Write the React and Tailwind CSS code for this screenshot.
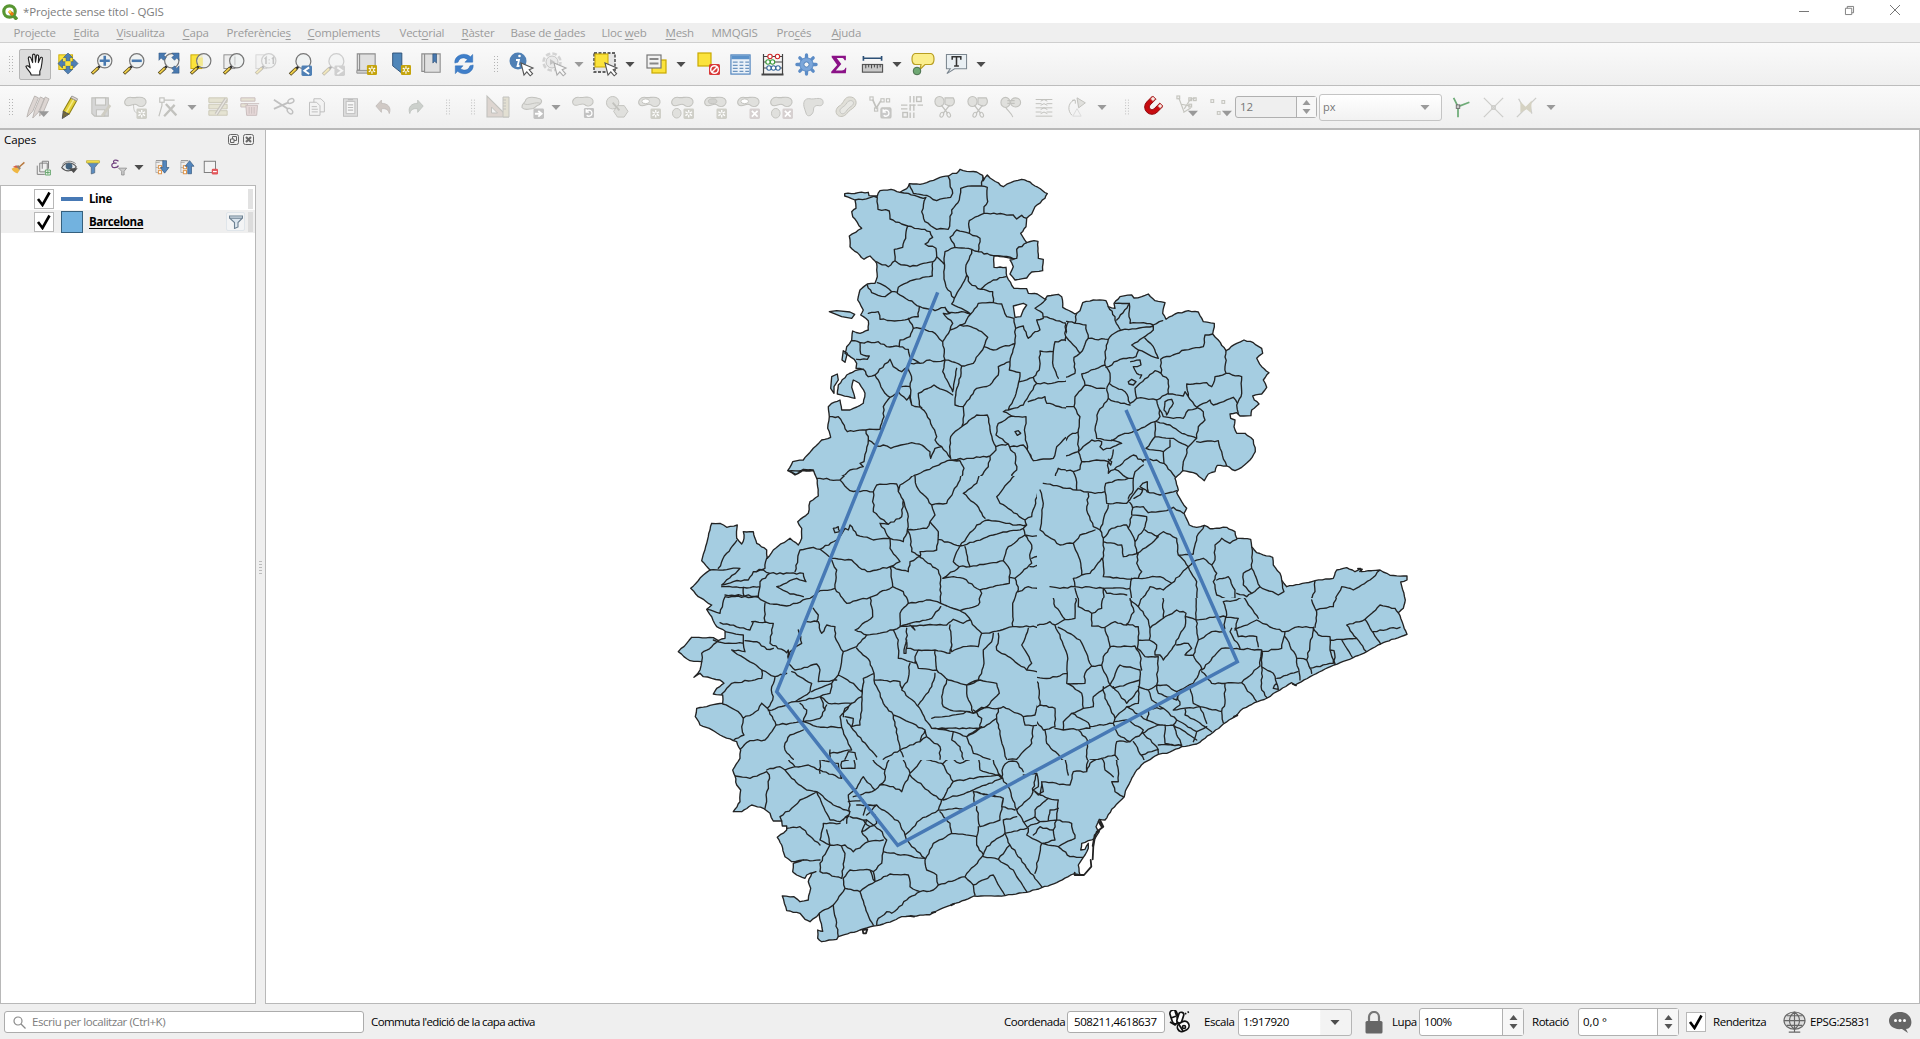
import React from "react";

/* ---------- map geometry: strings of x,y pairs, three units per pixel ---------- */
const SHEETS = {
  A: [760, 150],
  B: [1060, 270],
  C: [670, 470],
  D: [1030, 540],
  E: [720, 720],
};
const MAP_X = 266;
const MAP_Y = 130;

/* Area of the canvas that each sheet is responsible for. */
const SHEET_AREAS = {
  A: "M0 0H800V346H0z",
  B: "M800 0H1653V468H771V346H800z",
  C: "M0 346H771V630H0z",
  D: "M771 468H1653V630H771z",
  E: "M0 630H1653V873H0z",
};

const OUTLINE = [
  ["A", "254,131 325,127 327,137 352,138 360,122 393,118 420,127 440,116 448,101 480,103 500,98 540,82 566,78 578,70 590,70 600,58 620,64 650,66 668,76 670,92 682,75 690,84 730,110 752,98 785,88 810,96 825,108 848,122 862,131 855,145 825,170 815,192 800,205 798,230 782,250 800,278 822,272 834,274 835,325 850,328 848,362 815,366 800,384 765,390 750,372 760,350 750,330 765,326 720,320 702,318 702,352 738,352 740,378 762,415 800,416 805,430 832,432 855,448 862,438 895,433 905,440 908,472 945,492"],
  ["B", "60,122 68,98 100,90 138,92 145,110 165,115 162,100 180,80 215,75 222,84 245,80 265,72 285,92 315,98 308,130 318,148 345,132 385,122 415,126 430,155 463,160 458,192 475,210 498,242 530,220 552,210 580,218 605,235 608,250 590,265 605,290 627,308 610,330 620,352 605,372 578,378 583,390 597,402 575,420 573,437 540,438 530,428 510,432 512,445 525,450 522,470 530,490 555,490 580,510 586,545 570,570 545,592 525,602 500,588 472,586 465,605 445,612 433,632 410,612 368,602 345,625 355,660 350,668 365,695 380,715 372,730 388,765 410,772 433,766 450,776 500,772 525,785 530,805 572,808 575,830 590,848 638,862 640,885 660,910 665,930 680,950 765,932 820,925 830,900 860,893 885,905 900,895 905,905 935,902 960,900 990,916"],
  ["D", "1131,108 1131,120 1112,126 1126,180 1120,205 1105,218 1131,283 1085,298 1052,312 1010,335 968,354 912,375 850,405 795,435 785,428 740,455 712,474 683,485 640,505 615,530 580,552 550,577 500,612 455,620 410,640 385,643 342,668 320,690 302,722 290,745 283,770 245,808"],
  ["E", "1155,300 1138,298 1128,320 1138,335 1125,355 1105,362 1085,370 1082,390 1095,388 1105,370 1105,385 1090,412 1075,435 1080,465 1060,462 1010,488 965,503 920,517 855,527 762,528 735,540 690,556 640,578 630,584 570,588 545,590 520,602 480,615 460,618 420,630 355,650 350,658 305,665 293,655 293,630 308,634 300,600 298,580 290,590 270,605 255,598 240,580 200,572 187,528 222,530 240,545 265,540 272,505 265,485 275,460 288,455 260,465 255,475 230,465 218,455 220,430 250,420 215,425 195,410 185,375 172,352 200,330 200,318 187,318 185,303 160,303 150,280 130,265 95,255 65,275 40,275 60,245 62,210 50,195 45,168 38,150 60,115 62,90 50,65"],
  ["C", "190,812 150,795 118,775 90,765 76,740 80,715 110,710 140,702 158,700 158,675 130,672 140,655 162,640 150,630 125,625 100,620 90,610 72,622 90,600 95,575 60,572 25,545 50,520 65,502 130,503 145,512 165,505 165,483 140,470 125,440 110,418 125,405 85,380 62,355 100,315 120,300 95,272 110,220 120,180 125,160 150,160 170,172 202,165 200,205 215,222 222,205 220,185 250,185 260,220 290,240 292,265 310,240 325,228 350,212 360,205 385,225 395,205 395,175 383,155 415,130 420,95 445,78 442,30 430,0 400,0 375,15 355,3"],
  ["A", "160,962 130,958 108,973 83,962 98,935 130,930 160,895 185,870 212,862 203,835 208,800 205,770 215,760 240,750 245,780 270,780 310,760 315,730 298,700 280,690 275,712 285,745 265,740 232,732 235,705 260,675 285,662 310,658 288,655 290,640 283,628 255,610 260,590 275,570 278,543 300,550 325,540 325,512 302,495 310,480 293,450 300,420 322,402 345,400 352,380 350,340 330,318 312,328 270,290 268,258 305,235 278,200 275,185 288,175 285,150 254,138 254,131"],
];

const ISLANDS = [
  ["A", "208,485 230,482 270,486 284,493 275,505 245,500 208,485"],
  ["A", "215,680 232,672 235,690 222,710 222,730 212,715 215,680"],
  ["A", "250,602 262,610 255,637 246,630 250,602"],
];
const HOLE = ["A", "760,468 790,460 800,465 790,480 782,500 765,502 760,468"];
const HARBOUR = [
  ["E", "1140,300 1150,320 1130,335 1125,350 1120,380 1118,418"],
  ["E", "1136,305 1146,322 1124,345 1118,378"],
  ["E", "1112,420 1114,440 1092,465 1064,465 1064,458"],
  ["E", "428,630 442,628 438,640 430,640 428,630"],
  ["E", "572,588 582,590"], ["E", "636,578 646,576"], ["E", "694,556 702,552"],
  ["D", "788,432 798,436"], ["D", "612,530 622,526"], ["D", "984,86 996,88 990,94"],
];

const BORDERS = {
  A: `325,127 352,143 354,178 388,183 390,207 443,228 485,238 510,245|285,150 330,143 352,138|420,127 445,130 490,145 498,142 485,185 495,215 530,238 565,238 575,180 598,150 602,115 635,108 665,108 682,112 683,155 672,170 672,190 760,195 770,207 785,196 800,205|448,101 460,130 500,136 530,152 572,142 578,130 565,80|668,76 665,108|443,228 437,265 428,292 403,298 405,332 385,350 350,335|510,245 518,262 495,282 528,295 530,320 520,335 450,350 415,340 405,332|672,190 628,212 628,250 590,240 570,262 585,292 635,298 655,305 660,265 628,250|585,292 555,305 552,375 558,410 583,445 620,375 618,345 635,310 635,298|655,305 690,315 770,325 770,298 800,278|530,320 552,342|518,335 517,378 460,390 415,412 412,430 480,470 525,482 555,472 565,488 605,485 632,492 655,460 700,458 725,462|620,375 630,400 662,418 700,390 738,380|352,398 378,410 395,425 375,440 335,428 322,405|395,425 412,427|583,445 575,462 632,492|662,418 698,425 700,458|725,462 740,500 762,505 767,535|325,490 355,485 360,508 415,512 475,500 478,472|555,472 570,490 550,490 578,520 570,540 548,575|445,505 460,535 490,535 525,550 548,575 555,630 530,635 510,630 480,640 452,625 445,598 418,590 420,570 450,560 460,535|570,540 600,525 632,530 665,545 683,562 672,590 640,640 605,648 575,635 555,630|632,492 615,520 600,525|672,590 700,600 765,580 767,535 790,528 805,565 825,545 840,540 830,510 850,505 848,490 825,475 858,448|302,578 355,575 380,590 418,590|275,572 300,578 302,612 328,618 322,628 290,628|765,580 750,635 748,660 780,668 778,690 765,740 745,780|750,635 715,650 715,675 690,705 650,715 610,770 585,765 588,725 602,680 605,648|555,630 548,665 578,725 590,655|345,675 390,628 400,650 425,665 445,650 455,690 450,710 425,710|452,640 480,640|345,675 325,680 310,658|345,675 355,690 375,730 390,742 370,770 372,800 360,838 318,840 262,845 235,800 208,800|390,742 415,725 440,750 450,735 455,765 485,772|450,710 455,765|475,730 522,705 578,735|475,730 478,765 510,810 530,860 525,870 545,890 572,925|745,780 730,785 755,798 798,800 795,850 802,900 820,932 880,925 890,890 940,845 955,842|610,770 612,795 605,830 572,860 570,900 572,925|605,830 650,795 682,795 692,850 708,900|755,798 715,820 708,855 745,882 752,900 765,910 770,960 755,975 760,990|708,900 690,918 630,925 572,930 500,960 435,990|708,890 745,882|318,840 325,870 350,888 370,885 392,895 455,878 478,882 510,905 512,925 525,895 545,890|745,780 790,765 830,700 875,700 955,685|830,700 820,682 838,660 840,603 880,605 880,650 895,685|780,695 820,682|880,605 885,575 915,570 918,520 850,500|915,570 950,600 955,640 945,670 955,685|805,755 855,740 860,760 925,775 945,765 945,730 955,720|325,870 312,935 300,940 310,950 270,960 240,985 165,985 160,962|572,930 600,932 612,955 600,990|690,918 685,950 660,980 640,990|880,990 895,955 930,965 955,960|752,890 790,885 820,932|918,520 950,525 955,490 945,492|765,845 775,842 782,850 772,856 765,845|945,765 950,800 945,845`,
  B: `0,145 25,155 45,160 50,130|48,160 78,165 85,205 60,250 42,262 45,310 25,320 0,325|25,155 15,195 40,225 60,250|85,205 105,208 145,208 155,195 185,180 280,168|145,110 165,140 165,150 180,178|165,100 208,100 210,160 250,158 280,165 308,152|145,208 135,245 135,285 65,312 75,345 110,355 135,355|170,150 205,105|280,168 280,180 215,225 235,240 295,265 280,230 255,205|302,268 375,240 430,230 435,195 458,192|498,242 495,290 498,310 465,320 455,350 440,338 380,342 385,380 410,412 450,390 460,405 520,382 532,400|498,310 545,320 545,370 530,405 535,430|135,285 150,310 150,335 140,360 145,385 115,425 105,480 110,505 155,512 175,498 235,480 285,455 300,440 295,410 290,390 255,385 230,385 210,400 195,365 150,342|145,385 165,395 210,405|138,292 180,268 228,260 235,242|302,268 303,310 325,330 325,370 290,390|303,310 285,302 240,340 225,355 230,385|212,275 240,270 243,285 220,290 230,310 245,315 240,325|205,335 215,328 228,335 220,345 207,342 205,335|325,372 370,378 375,365 385,380|300,420 310,440 370,445 385,420 410,415|315,395 335,388 340,400 320,435 312,420 315,395|290,455 330,465 365,490 410,505 415,470 435,450 430,425 410,412|285,500 340,505 385,530 410,505|410,515 475,512 485,545 500,588|285,455 285,500 258,535 310,545 330,530 330,510|385,530 370,575 368,602|310,545 312,580 345,620|75,345 45,380 42,410 60,440 55,480 55,545 65,575 60,598 40,605|0,412 42,410|55,485 30,495 0,530|55,545 0,565|55,545 95,510 125,515 120,530 130,540 160,530 185,520 155,510|65,575 110,570 145,575 155,565 160,540|145,575 145,610 220,555 250,575|165,598 205,625 220,625 225,605 250,585|145,568 155,575 152,585 145,575|40,605 48,625 50,660 0,650|0,595 40,605|50,660 105,670 135,665 137,640 205,625|135,665 140,700 200,700 215,680 235,655 248,660 240,675 222,685|220,625 220,660 205,685|85,670 80,720 100,770 120,780 145,705|220,712 250,710 265,728 320,722 340,712 370,730|205,690 218,715 215,735 260,740 255,770 225,815 205,775 215,740|120,780 130,805 155,775 200,765 205,775|260,665 300,675 350,662|0,825 40,820 60,795 105,780|130,805 130,920 190,925 235,925 245,905 230,880 235,850 190,860 185,825 130,815|225,815 230,850 275,820 295,800 255,780|290,800 310,785 350,805 355,855 385,890 335,940 300,920 235,925|40,820 60,870 65,915 40,925 45,950 0,955 -30,950|65,915 90,910 125,865 130,880|355,855 400,852 410,800 433,766|385,890 400,875 430,865 455,885 465,870 465,825 485,805 510,820 530,808|455,885 470,910 460,935 470,975 495,985 525,985 525,960 505,920 470,930|575,830 575,895 550,910 550,945 575,970 600,950 575,895|600,950 655,975 672,965 665,930|530,970 560,980 575,970|765,932 765,965 750,990|825,990 845,950 880,960 930,930 960,900|45,950 130,955 210,955 215,925|130,955 140,970 200,975|210,955 215,990|245,990 270,950 310,960 335,940|385,890 410,935 412,990|45,955 55,990|130,955 130,990|250,570 290,570 310,580|248,640 262,635 265,665 240,650 248,640|-50,640 0,650|-60,660 -50,700 -60,780 0,825`,
  C: `440,25 510,30 540,62 610,65|510,30 540,0|610,65 620,45 680,42 685,65 700,90 695,140 655,163 610,125 610,65|685,65 690,45 735,15 790,0|735,15 740,50 785,105 830,100 870,30 880,0|785,105 795,135 780,155 770,175 712,180 715,140 700,90|655,163 630,160 660,205 700,215 712,180|390,240 430,232 450,238 500,210 525,175 535,180 540,165 560,195 610,210 660,205|490,175 505,170 510,185 495,188 490,175|450,238 485,265 545,270 575,298 600,305 660,290 690,275 660,235 660,205|660,290 668,350|660,290 715,305 720,275 750,258 725,245 720,195 712,180|780,155 805,185 800,240 750,245 750,262 805,300 812,330|805,208 870,228|870,228 850,275 868,290 818,325|870,228 920,165 955,150 1040,165 1070,165 1060,175 970,195 870,228|935,0 920,40 880,70 920,105 945,145|1030,0 1035,15 980,80 990,100 1065,150 1070,165|1120,30 1105,60 1085,140 1065,150|885,230 900,290 1000,272 1015,230 1065,195 1060,175|868,290 900,290|1000,272 1020,300 1018,340 930,360 880,325 850,320 820,325|812,330 812,400 870,422 925,405 935,370 930,360|1065,195 1085,225 1080,265 1085,280 1035,325 1020,322|1065,195 1120,200|1080,290 1140,285|1085,265 1130,250|1035,325 1045,360 1028,400 1028,470 1110,470|1045,365 1075,350 1130,358|485,270 500,300 495,355 530,400 600,382 668,350 700,365 715,400 780,390 812,400|495,355 450,362 420,385 350,408 290,398|600,382 608,440 555,480 590,495 670,480 690,470 690,430 715,400|690,470 740,455 785,445 812,410|690,470 770,465 830,465 850,448 880,460 900,450|870,422 885,430 915,470 935,490 970,485 1028,470|935,490 925,530 880,530 845,545 840,465|970,490 965,515 940,540 940,590 925,630 890,645|985,490 980,540 1030,570 1070,600 1110,605|1075,475 1055,525 1085,580 1070,600|710,475 708,550 702,550 710,510|720,465 735,480 725,470|670,480 685,510 685,565 720,575 740,580 735,560 745,540 710,535|745,540 795,540 840,550 845,530|795,540 800,600 745,595 735,575|800,600 835,630 890,645 890,670 910,730 840,720 820,710 815,680 830,630|795,610 785,650 745,705|890,645 930,630 980,640 988,670 950,710 910,730|910,720 935,745 930,775 785,775|785,745 900,725|720,580 712,635 695,660 740,705 785,775|590,495 560,530 520,545 510,600 505,615 550,640 575,665 580,640|560,535 600,575 612,610 580,625 575,700 570,765|520,545 495,500 495,470 470,465 455,490 445,455 410,455|612,630 690,635 695,655|612,610 612,630 640,700 670,735 690,840|670,735 765,780 750,815 690,840|430,415 445,435 440,455|385,480 395,520 360,545 355,580 375,600 440,582 450,600 445,635 500,630|365,605 425,640 420,665 375,695 295,722|425,665 485,640 505,615|375,695 450,680 475,700 545,700 575,680|450,680 465,720 450,745 400,755|390,700 410,720 400,755|485,640 480,670 450,680|470,705 465,720|400,755 440,770 515,772 510,740 545,700|275,600 315,620 350,610|315,620 305,650 308,690 292,715|155,672 185,640 275,625 275,600|292,715 318,765 400,755|275,700 265,720 220,745 215,770 222,795 190,812|158,702 205,725 220,745|275,700 292,715|318,765 285,810 240,812 210,838|145,512 125,530 95,550 95,575|130,510 165,520 220,520 220,495 165,485|185,540 250,580 275,600|185,540 225,545 220,520|225,512 260,515 290,538 310,535|300,520 350,548 355,540 355,580|245,455 310,460 300,520|150,458 180,465 240,480 250,455|285,400 285,455|110,418 150,430 165,380 265,382 290,398|165,375 265,378|120,300 210,295 155,345 190,335 235,330 250,305 280,300 300,310|155,350 220,352 270,350 265,382|220,352 222,378|270,350 270,335 300,310 400,310 408,335 380,325 320,350 360,372 400,380|375,305 390,240|145,295 170,250 200,212|285,295 290,265|250,305 285,295|400,780 360,795 345,820 345,840 370,868|515,772 545,840 480,850|480,840 480,868|530,750 550,780 620,860|525,740 550,745 545,770 570,765|520,740 525,715 545,700|525,868 535,845 555,848 560,868|785,775 850,785 890,800 935,770|765,780 770,800 810,830 810,868|850,785 845,810 870,830 880,868|890,800 960,760 980,745|980,745 1000,830 1010,868|910,730 935,712 985,715 980,745|985,715 1000,710 1060,740|1110,605 1108,690 1095,735 1060,740 1065,765 1110,765|890,800 910,850 960,868|1090,770 1085,820 1040,868 1015,868|690,840 700,860|750,815 770,800|640,868 690,840`,
  D: `65,155 75,200 105,238 135,235 140,150|0,265 60,245 75,255 105,238|75,255 100,315 112,345 112,400 110,430 165,430 165,400 185,378 215,375|85,262 150,300 185,378|145,140 145,200 185,220 215,205 220,140|185,220 185,258 225,262 240,320 315,318 330,345 335,390|225,262 255,245 290,255 312,215 300,175 305,115|300,180 325,200 355,240 360,265 358,300 325,300 325,260 290,252|325,200 345,150 400,150 400,235 360,265|400,235 440,210 468,220 465,260 430,320 400,360 390,345 375,345 380,315 358,300|325,300 322,325 345,350 385,350|385,350 380,435 355,450 325,440|495,120 498,230 505,300 490,345 515,385 490,430 440,455 410,435 380,435|468,230 498,240 580,228|505,300 545,275 580,275|440,315 475,310 485,325 465,345 490,345|515,390 575,325 620,325 695,330|515,395 545,430 635,428 690,378 695,330|215,375 220,350 242,320|215,375 240,435 270,375 330,390|240,435 250,445 330,420|330,390 325,450 290,490 250,440|0,410 60,415 110,400|110,430 155,460 160,505 190,500 190,470 240,435|220,440 225,475 255,535 290,500 325,490 325,450|10,510 30,495 75,505 75,560 40,570 20,545 0,580|30,495 25,430 0,410|75,565 100,570 100,545 125,520 160,505|125,520 175,548 180,565 100,570|180,560 250,550 255,535|45,570 50,610 90,650 120,690 170,690 172,600 145,570|250,550 265,585 300,605 335,580 340,570 290,540 255,545|335,580 385,555 430,555 440,540 400,505 365,480 355,450|380,435 385,460 440,480 450,460|360,505 350,540 390,555|360,505 400,505|290,500 350,540|430,510 460,505 510,500 575,515 580,548|480,445 490,490 510,500|585,430 585,490 575,515|440,460 450,495 430,510|465,505 465,525 525,560 545,575|510,500 530,550|440,540 500,575 530,560|500,575 490,605|430,555 500,600|405,555 405,610 455,618 430,555|340,580 380,620 385,640|310,605 342,660|335,645 385,628|385,615 455,615|300,605 260,605 255,645 215,655 265,720 268,665 255,645|172,690 180,660 215,655|180,600 172,615|635,428 680,485|695,330 695,380 695,450 712,474|695,380 730,400 740,430 730,445 745,448 740,430|740,415 803,395|695,335 755,325 765,275 730,265 680,240 615,270 625,235 580,228|580,185 590,225 580,275|580,185 620,180 640,170 685,235|605,265 600,275 630,325|615,265 625,290 680,290 685,320|765,275 795,262 850,262 848,280 830,360 800,355 765,290|800,355 810,420|830,360 845,400|840,385 910,370 900,330|850,262 865,285 900,290 900,330|900,300 980,295 950,255 1005,238 1052,312|935,300 968,354|900,330 912,332 915,372|980,295 1010,335|1005,238 1050,195 1095,205 1105,218|1030,275 1110,262|845,180 860,215 855,262|860,210 910,200 925,150`,
  E: `45,168 90,175 140,155 148,165 135,265|140,150 180,140 195,150 225,140 190,100 200,75|195,150 215,175 260,210 290,215 340,255 390,275|290,215 240,240 215,265 180,290 185,303|225,140 265,135 300,150 365,175 355,130 305,120 330,95|300,160 300,120|330,95 375,95 400,100 405,145 365,145 365,125 385,120|300,235 330,300 360,305 385,290 390,255 385,225 410,205 430,170 465,210 400,230|300,235 290,215|405,110 450,115 495,150 495,180 465,210|430,240 385,245|495,150 510,110 545,110 570,160 545,215 520,200 480,195|570,160 610,115 665,130 700,185 680,215 665,240 640,225 570,165|665,240 655,270 600,300 555,345 540,310 470,255 410,255|655,270 740,265 765,255 760,215 835,230|700,185 780,170 835,165 845,175 760,210 670,240|670,130 690,115 720,130 775,110 780,150 835,165|820,120 835,160 865,200|850,140 865,125 890,125 910,155|845,175 850,140|865,200 890,270 910,305 925,325|890,270 935,225 950,160|910,165 950,160 955,200 940,210 960,225 965,185 1050,195 1060,155 1100,155 1110,130|1035,115 1045,165|1105,90 1100,155|960,225 985,235|965,185 970,215 955,225 945,215|850,235 840,300 780,320 770,260|760,215 850,235 845,260 885,270|660,275 690,310 695,340 770,350 775,320|695,340 640,370 615,420 620,450 650,465 655,495|770,350 770,375 790,405 735,470 760,495 820,465 855,527|655,495 735,470|760,495 765,525|790,405 800,380 855,340 850,300 890,290|790,410 835,418 870,375 855,340|835,418 880,450 920,515|870,375 965,500|945,460 965,370 920,345 925,325|855,340 920,325|965,370 1015,380 1065,355 1055,310 1010,300 960,305 945,290 915,305|960,305 925,320|965,370 1005,360 1000,330 960,320 940,345|1010,300 1015,240 985,235 945,270 945,290|1000,330 1010,300|985,300 990,270 1015,265|1015,380 1050,410 1090,412|555,345 575,380 615,415 490,395 485,430 460,455|490,395 500,360 480,330|300,360 310,310 360,310|320,330 330,375 375,375 400,395 445,365 425,335 440,300 390,290|330,375 300,360|330,375 300,430 300,455 365,475 375,400 365,380|300,420 250,420|445,365 490,360|440,300 480,330|300,375 240,320 200,325|370,475 390,450 450,450 465,485 420,515 375,505 370,475|465,485 510,462 565,465 570,500 600,515 640,510 655,495|450,450 460,455 465,485|600,515 560,540 515,580 500,575 475,595 470,615|420,515 450,600 460,615|375,505 340,555 355,650|340,555 298,580|1110,130 1150,105 1185,105 1195,150 1195,185 1175,185 1185,215 1210,230|1150,110 1155,150 1180,170|370,300 385,285 380,310|430,285 440,255 470,255 440,285|430,300 450,320 425,335|450,320 470,310 465,285`,
};

const toPoints = ([sheet, text]) => {
  const [ox, oy] = SHEETS[sheet];
  return text.trim().split(/\s+/).map((p) => {
    const [x, y] = p.split(",").map(Number);
    return [ox + x / 3 - MAP_X, oy + y / 3 - MAP_Y];
  });
};

const noise = (x, y, k) => {
  const s = Math.sin(x * 12.9898 + y * 78.233 + k * 37.719) * 43758.5453;
  return (s - Math.floor(s)) * 2 - 1;
};

/* Adds the small irregularities of a surveyed border between two vertices. */
const roughen = (pts, amount) => {
  const out = [pts[0]];
  for (let i = 1; i < pts.length; i++) {
    const [x0, y0] = pts[i - 1];
    const [x1, y1] = pts[i];
    const len = Math.hypot(x1 - x0, y1 - y0);
    const n = Math.max(1, Math.round(len / 3.4));
    for (let j = 1; j < n; j++) {
      const t = j / n;
      const off = noise(x0 + j, y1 - j, i) * amount;
      out.push([x0 + (x1 - x0) * t - ((y1 - y0) / len) * off, y0 + (y1 - y0) * t + ((x1 - x0) / len) * off]);
    }
    out.push([x1, y1]);
  }
  return out;
};
const toPath = (pts) => "M" + pts.map((p) => p[0].toFixed(1) + " " + p[1].toFixed(1)).join("L");

const outlinePath = toPath(roughen(OUTLINE.flatMap(toPoints), 0.5)) + "Z";
const borderPaths = Object.entries(BORDERS).map(([k, v]) => [
  k,
  v.split("|").map((line) => toPath(roughen(toPoints([k, line]), 0.8))).join(""),
]);
const islandPath = ISLANDS.map((l) => toPath(toPoints(l)) + "Z").join("");
const holePath = toPath(toPoints(HOLE)) + "Z";
const harbourPath = HARBOUR.map((l) => toPath(toPoints(l))).join("");

function MapCanvas() {
  return (
    <svg className="block h-[873px] w-[1653px]" viewBox="0 0 1653 873" fill="none">
      <defs>
        <clipPath id="province"><path d={outlinePath} /></clipPath>
        {borderPaths.map(([k]) => (
          <clipPath key={k} id={"sheet" + k}><path d={SHEET_AREAS[k]} /></clipPath>
        ))}
      </defs>
      <path d={outlinePath} fill="#a5cde1" />
      <g stroke="#232323" strokeWidth="1.35" strokeLinejoin="round" strokeLinecap="round">
        <g clipPath="url(#province)">
          {borderPaths.map(([k, d]) => <path key={k} d={d} clipPath={"url(#sheet" + k + ")"} />)}
        </g>
        <path d={holePath} fill="#fff" />
        <path d={islandPath} fill="#a5cde1" />
        <path d={outlinePath} />
        <path d={harbourPath} strokeWidth="1.8" />
      </g>
      <path d="M671.7 162.3L510.7 561.7L631.7 715.3L971.3 531.7L860 280" stroke="#4779b5" strokeWidth="3.5" />
    </svg>
  );
}

/* ---------- icons, drawn on a 24 x 24 grid ---------- */
const Svg = ({ children, className = "h-6 w-6" }) => (
  <svg viewBox="0 0 24 24" fill="none" className={"block shrink-0 overflow-visible " + className}>{children}</svg>
);
const Handle = () => (
  <g fill="#b4b4b4">
    {[0, 1, 2, 3, 4, 5].map((i) => (
      <g key={i}><rect x="10" y={4 + i * 3} width="1" height="1" /><rect x="13" y={4 + i * 3} width="1" height="1" /></g>
    ))}
  </g>
);
const Tri = ({ c = "#4c4c4c" }) => <path d="M6.5 9.5h11L12 15.5z" fill={c} />;
const Lens = ({ children, back, x = 0 }) => (
  <g>
    {back}
    <path d={`M${8 + x} 16L${1 + x} 22.5`} stroke="#51451b" strokeWidth="3.6" />
    <path d={`M${7.3 + x} 16.5L${1.6 + x} 22`} stroke="#f0cf4a" strokeWidth="2" />
    <path d={`M${10 + x} 14L${8 + x} 16`} stroke="#222" strokeWidth="2.6" />
    <circle cx={15 + x} cy="8.5" r="7.8" fill="#eef1f2" fillOpacity=".82" stroke="#777" strokeWidth="1.3" />
    {children}
  </g>
);
const Badge = ({ c = "#c5a40c", t = "star" }) => (
  <g>
    <rect x="13" y="13" width="11" height="11" rx="1.5" fill={c} />
    {t === "star" && <g><path d="M18.500 14.500v8M15 16.500l7 4M22 16.500l-7 4" stroke="#fff" strokeWidth="1.300" /><circle cx="18.500" cy="18.500" r="1.300" fill={c} /></g>}
    {t === "lt" && <path d="M21 15l-5 3.5 5 3.5" stroke="#fff" strokeWidth="2" />}
    {t === "gt" && <path d="M16 15l5 3.5-5 3.5" stroke="#fff" strokeWidth="2" />}
    {t === "x" && <path d="M15.5 15.5l6 6M21.5 15.5l-6 6" stroke="#fff" strokeWidth="1.8" />}
    {t === "arrow" && <path d="M14.5 18.5h6M18 15.5l3.500 3-3.500 3" stroke="#fff" strokeWidth="2" />}
    {t === "rot" && <path d="M16 21a3.300 3.300 0 1 0-.3-4M15.500 14.500v3h3" stroke="#fff" strokeWidth="1.400" />}
  </g>
);
const Cursor = ({ s = "#555", f = "#fff" }) => (
  <path d="M12 11l3 12 2.8-3.2 3.4 4 2.4-2-3.4-4 3.8-1.8z" fill={f} stroke={s} strokeWidth="1.1" />
);
const G = "#c2c2be";
const GF = "#e0e0dd";
const Blob = ({ d = "M1.500 9C-1 5 3 .5 8 1.500c4 .8 7-1 11 0 4 1 5.500 5 2.500 8-2.500 2.300-6 1.500-8-.3C10 6.500 5 13 1.500 9z" }) => <path d={d} fill={GF} stroke={G} strokeWidth="1.100" />;

const ICONS = {
  handle: <Handle />,
  tri: <Tri />,
  triGrey: <Tri c="#9a9a9a" />,
  hand: <path d="M7.5 23c0-3-4.500-5.500-5.500-9 1-1.500 3-.5 4.500 1.500L4.500 5.500c0-2 2-2 2.700-.2L9 10V2.500C9 .8 11.300.8 11.500 2.500L12 9.500l1-6.500c.4-1.500 2.300-1.200 2.300.5l-.3 6.500 2-4.800c.7-1.400 2.500-.8 2.200.8-.8 5.500-.4 9-2.700 13V23z" fill="#fff" stroke="#222" strokeWidth="1.2" strokeLinejoin="round" />,
  pan: <g><rect x="2" y="2" width="15" height="16" fill="#fbe33c" stroke="#c9a800" /><g fill="#4f80b5" stroke="#2d5076" strokeWidth=".6"><path d="M12 0l5 5h-3v4h-4V5H7zM12 23l5-5h-3v-4h-4v4H7zM1 11.500l5-5v3h4v4H6v3zM23 11.500l-5-5v3h-4v4h4v3z" /></g><rect x="9" y="9" width="6" height="5" fill="#fbe33c" /></g>,
  zoomIn: <Lens><path d="M15 3v11M9.500 8.500h11" stroke="#4879b0" strokeWidth="2.800" /></Lens>,
  zoomOut: <Lens><path d="M9.500 8.500h11" stroke="#4879b0" strokeWidth="2.800" /></Lens>,
  zoomFull: <g><Lens /><g fill="#4879b0" stroke="#2d5076" strokeWidth=".5"><path d="M1 0h8L6.500 2.500 9 5 6 8 3.500 5.500 1 8zM23 0v8l-2.500-2.500L18 8l-3-3 2.500-2.500L15 0zM23 22v-8l-2.500 2.500L18 14l-3 3 2.500 2.500L15 22z" /></g></g>,
  zoomSel: <Lens back={<rect x="1" y="2" width="12" height="15" fill="#fbe33c" stroke="#c9a800" />}><path d="M9 5h5v9H9z" fill="#f3e98f" /></Lens>,
  zoomLayer: <Lens back={<rect x="1" y="2" width="12" height="15" fill="#eee" stroke="#8b8b8b" />}><path d="M13 4v9" stroke="#c4c4c4" /></Lens>,
  zoomOne: <g opacity=".3"><Lens back={<rect x="1" y="2" width="12" height="15" fill="#eee" stroke="#8b8b8b" />}><path d="M10.500 6.500l1.500-1.500v7M18.500 6.500l1.500-1.500v7M15.500 7v1M15.500 10.500v1" stroke="#555" strokeWidth="1.700" /></Lens></g>,
  zoomLast: <g><Lens /><Badge c="#4f80b5" t="lt" /></g>,
  zoomNext: <g opacity=".32"><Lens /><Badge c="#888" t="gt" /></g>,
  mapNew: <g><path d="M5 1h17v20H5zM5 1H2.500v17.500h2" fill="#e0e0e0" stroke="#8d8d8d" strokeWidth="1.200" /><path d="M2 19h14v3H2z" fill="#cfcfcf" stroke="#8d8d8d" /><Badge /></g>,
  markNew: <g><path d="M4 0h10v22l-5-4-5-4z" fill="#4f86b9" stroke="#2d5076" /><Badge /></g>,
  marks: <g><path d="M5 1h17v20H5zM5 1H2v19h3" fill="#e0e0e0" stroke="#8d8d8d" strokeWidth="1.200" /><path d="M14 1h4v10l-2-2-2 2z" fill="#4879b0" stroke="#2d5076" strokeWidth=".7" /></g>,
  refresh: <g fill="#3f7fca" stroke="#2765ae" strokeWidth=".5"><path d="M2 11C1 3 12-2 19 4l2.500-2.500V10H13l2.800-2.800C12 4 7 5 5.500 10z" /><path d="M22 13c1 8-10 13-17 7l-2.500 2.500V14H11l-2.800 2.800C12 20 17 19 18.500 14z" /></g>,
  info: <g><circle cx="9" cy="9" r="8.500" fill="#4f80b5" /><circle cx="10.500" cy="4" r="1.300" fill="#fff" /><path d="M7 8h3l-1.500 6h2" stroke="#fff" strokeWidth="1.800" /><Cursor /></g>,
  gearRun: <g opacity=".45"><circle cx="10" cy="10" r="8.500" stroke="#aaa" strokeWidth="2.500" strokeDasharray="4.500 2.200" /><circle cx="10" cy="10" r="6" fill="#ddd" stroke="#888" /><path d="M8 7l5 3-5 3z" fill="#888" /><Cursor /></g>,
  select: <g><rect x="1" y="1" width="21" height="19" fill="#e6e6e6" stroke="#333" strokeWidth="1.300" strokeDasharray="3 1.500" /><rect x="2" y="2" width="13" height="13" fill="#fbe33c" stroke="#c9a800" /><Cursor /></g>,
  form: <g><rect x="8" y="8" width="14" height="13" fill="#fbe33c" stroke="#c9a800" strokeWidth="1.200" /><rect x="3" y="3" width="14" height="13" fill="#f2f2f2" stroke="#777" strokeWidth="1.200" /><path d="M5.500 7h9M5.500 11.500h9" stroke="#888" strokeWidth="2" /></g>,
  deselect: <g><rect x="2" y="1" width="13" height="13" fill="#fbe33c" stroke="#c9a800" strokeWidth="1.200" /><rect x="13" y="12" width="11" height="11" rx="1.500" fill="#d93a3a" /><circle cx="18.500" cy="17.500" r="3.800" stroke="#fff" strokeWidth="1.500" /><path d="M16 20l5-5" stroke="#fff" strokeWidth="1.500" /></g>,
  table: <g><rect x="2" y="2" width="20" height="20" fill="#eaf1f8" stroke="#4d82bd" strokeWidth="1.200" /><rect x="2.500" y="2.500" width="19" height="4" fill="#5b91c9" /><path d="M4 9.500h5M11 9.500h4M17 9.500h4M4 12.800h5M11 12.800h4M17 12.800h4M4 16h5M11 16h4M17 16h4M4 19.300h5M11 19.300h4M17 19.300h4" stroke="#6b94bf" strokeWidth="1.300" /></g>,
  abacus: <g><path d="M2.500 2v20M21.500 2v20M2 4.500h20M2 10h20M2 16h20" stroke="#444" strokeWidth="1.200" /><path d="M0.500 22.500h22" stroke="#444" strokeWidth="2" /><g strokeWidth="1.100"><g fill="#fff" stroke="#cf2626"><circle cx="9" cy="4.500" r="2.200" /><circle cx="16.500" cy="4.500" r="2.200" /></g><g fill="#fff" stroke="#3b9a3b"><circle cx="7" cy="10" r="2.200" /><circle cx="11.500" cy="10" r="2.200" /></g><g fill="#fff" stroke="#38699d"><circle cx="8" cy="16" r="2.200" /><circle cx="12.500" cy="16" r="2.200" /><circle cx="17" cy="16" r="2.200" /></g></g></g>,
  gear: <g><g stroke="#5c8cc6" strokeWidth="3.400" strokeLinecap="round"><path d="M12 2v20M2 12h20M5 5l14 14M19 5L5 19" /></g><circle cx="12" cy="12" r="7" fill="#7ba6da" stroke="#5c8cc6" /><circle cx="12" cy="12" r="2.700" fill="#f5f5f5" stroke="#4e7fb9" /></g>,
  sigma: <path d="M4 3h15.500v5H18c-.5-2-1.500-2.500-3.500-2.500H9.500l5 6.500-6 7h6.500c2 0 3.500-1 4-3H20L19.500 22H3.500v-1.500L10 13 4 4.500z" fill="#8b1287" />,
  measure: <g><path d="M2.500 5.500h19M2.500 3v5M21.500 3v5" stroke="#2d5076" strokeWidth="1.700" /><rect x="1.500" y="12" width="21" height="8" fill="#c9c9c9" stroke="#555" strokeWidth="1.200" /><path d="M5 12v4M8 12v3M11 12v4M14 12v3M17 12v4M20 12v3" stroke="#444" /></g>,
  tip: <g><path d="M4 1.500h16c4 1 4 10 0 11h-6l-5 5 1-5H4c-4-1-4-10 0-11z" fill="#fbee8c" stroke="#b89e22" strokeWidth="1.200" /><circle cx="6" cy="19" r="3.800" fill="#6fa873" stroke="#4a6e4d" /></g>,
  text: <g><path d="M1.500 1.500h21v15H10L2 21.500l3.500-5h-4z" fill="#e9eff3" stroke="#7c8790" strokeWidth="1.100" /><path d="M7.500 7V4h9v3M12 4v9.500M9.500 13.500h5" stroke="#333" strokeWidth="1.600" /></g>,
  pencils: <g fill="#dcd5d2" stroke="#bab5b2"><path d="M9 0l4 2-6 14-6 6 2-8zM15 1l4 2-6 14-6 6 2-8zM20 1l4 2-6 14-4 4 1-7z" /><path d="M13 16h11l-5.500 6z" fill="#999" stroke="none" /></g>,
  pencil: <g><path d="M14.500 2l6 3-8 14-6-3z" fill="#e2cf37" stroke="#8f8116" strokeWidth="1.100" /><path d="M17.500 3.500l-8 14" stroke="#f5ec88" strokeWidth="1.500" /><path d="M14.500 2l1-2 6 3-1 2z" fill="#e7d9d2" stroke="#999" /><path d="M6.500 16l6 3-7 4.500z" fill="#756a3a" stroke="#555" /></g>,
  save: <g stroke={G} strokeWidth="1.200"><path d="M2 2h18v20H5l-3-3z" fill="#d6d6d6" /><path d="M6 2h11v8H6zM7 15h9v7H7z" fill="#efefef" /><path d="M22 10l-9 12" stroke="#cfcdc3" strokeWidth="3" /></g>,
  blobNew: <g><Blob /><path d="M10 9c0 6 1 8 4 9" stroke={G} /><Badge c="#cfcfc8" /></g>,
  vertex: <g stroke={G} strokeWidth="1.300"><rect x="2" y="1" width="5" height="5" /><path d="M4.500 6v4L1 22M7 3.500h12" /><path d="M9 8l12 13M19 9l-12 13" strokeWidth="2.600" /></g>,
  tableEdit: <g><path d="M2 2h20v5H2zM2 9h20v5H2zM2 16h20v5H2z" fill="#e5e3d2" stroke="#cbc8b6" /><path d="M21 3L10 20" stroke="#c7c4be" strokeWidth="4" /><path d="M21 3L10 20" stroke="#e9e7e2" strokeWidth="1.500" /></g>,
  trash: <g stroke="#cbbfbf" strokeWidth="1.200"><path d="M1 1h17v4H1zM1 8h8v4H1z" fill="#e7e3d4" /><path d="M5 8h18M7 10h14l-1 12H8z" fill="#e6d8d8" /><path d="M11 12v8M14 12v8M17 12v8" /></g>,
  cut: <g stroke="#c0c0c0" strokeWidth="1.500"><path d="M1 4l15 10M1 14l16-7" strokeWidth="2" /><ellipse cx="19.500" cy="5.500" rx="3.500" ry="2.300" transform="rotate(-25 19.500 5.500)" /><ellipse cx="18.500" cy="16.500" rx="3.500" ry="2.300" transform="rotate(45 18.500 16.500)" /></g>,
  copy: <g stroke="#bdbdbd" strokeWidth="1.100" fill="#f3f3f3"><path d="M9 2h8l4 4v11H9z" /><path d="M4 6h8l4 4v11H4zM6.500 11h6M6.500 14h7M6.500 17h7" /></g>,
  paste: <g stroke="#bdbdbd" strokeWidth="1.100"><rect x="4" y="2" width="16" height="20" fill="#ddd" /><path d="M7 5h10v14H7z" fill="#f6f6f6" /><path d="M9 9h6M9 12h6M9 15h6M9 3h6" strokeWidth="1.400" /></g>,
  undo: <path d="M9 4v4c8 0 13 5 10 13-1-4-3-7-10-6v4.500L2 11.500z" fill="#d0c9c5" stroke="#beb9b6" strokeLinejoin="round" transform="translate(1.500 0) scale(.9)" />,
  redo: <path d="M15 4v4C7 8 2 13 5 21c1-4 3-7 10-6v4.500l7-8z" fill="#ccd0cc" stroke="#babeba" strokeLinejoin="round" transform="translate(1 0) scale(.9)" />,
  square: <g><path d="M1 1v21h21z" fill="#ddd5d0" stroke={G} strokeWidth="1.100" /><path d="M5.500 12v6h6z" fill="#f4f4f4" stroke={G} /><path d="M17 2h6v20h-6z" fill="#e2dfd2" stroke={G} /><path d="M17 5h3M17 8h3M17 11h3M17 14h3" stroke={G} /></g>,
  move: <g><Blob d="M1 12c-1-4 4-5 4-8 2-4 10-3 15-1 3 2 1 6-3 7l-4 3c-4 0-9 3-12-1z" /><path d="M3 8c5 3 12-3 18 0" stroke={G} /><Badge c="#c2c2c2" t="arrow" /></g>,
  rotate: <g><Blob /><Badge c="#c2c2c2" t="rot" /></g>,
  simplify: <g><circle cx="8" cy="7" r="6.500" fill={GF} stroke={G} /><path d="M9 16l4-6h7l4 6-4 6h-7z" fill={GF} stroke={G} /><path d="M8 7l7 8" stroke={G} strokeWidth="2" /></g>,
  ring: <g><Blob /><ellipse cx="8" cy="5.500" rx="4" ry="2.500" fill="#fff" stroke={G} /><Badge c="#cfcfc8" /></g>,
  part: <g><Blob /><ellipse cx="6" cy="18" rx="4.500" ry="5" fill={GF} stroke={G} /><Badge c="#cfcfc8" /></g>,
  fill: <g><Blob /><ellipse cx="9" cy="5.500" rx="4.500" ry="2.500" fill="#d2d2cf" stroke={G} /><Badge c="#cfcfc8" /></g>,
  delRing: <g><Blob /><ellipse cx="8" cy="5.500" rx="4" ry="2.500" fill="#fff" stroke={G} /><Badge c="#d6d0d0" t="x" /></g>,
  delPart: <g><Blob /><ellipse cx="6" cy="18" rx="4.500" ry="5" fill={GF} stroke={G} /><Badge c="#d6d0d0" t="x" /></g>,
  reshape: <Blob d="M2 14c-3-8 0-13 6-12 5 1 10-2 14 1 2 3 1 7-3 7-5-1-7 1-7 5 0 4-5 9-8 5z" />,
  offset: <g><path d="M3 21c-4-4-1-9 3-11 4-3 4-9 10-9 7 0 9 7 5 11-3 3-5 3-8 7-3 4-8 4-10 2z" fill="#e0dfd8" stroke="#bfbeb6" /><path d="M6 18c-2-3 1-5 4-7s3-6 7-6 4 4 1 6-4 3-6 6-5 3-6 1z" fill="#e8e8e4" stroke={G} /></g>,
  splitVertex: <g stroke={G} strokeWidth="1.200"><rect x="1" y="1" width="3.500" height="3.500" /><rect x="13" y="3" width="3.500" height="3.500" /><rect x="19" y="3" width="3.500" height="3.500" /><path d="M4 4l4 9 5-8" strokeWidth="1.800" /><rect x="6" y="13" width="3.500" height="3.500" /><Badge c="#cacaca" t="rot" /></g>,
  merge: <g stroke={G} strokeWidth="1.500"><path d="M10 0v24M14 0v24M0 10h24M0 14h10" strokeDasharray="7 2" /><rect x="17" y="1" width="5" height="5" /><rect x="2" y="18" width="5" height="5" /></g>,
  scissorBlob: <g stroke={G} strokeWidth="1.200"><ellipse cx="6" cy="6" rx="5" ry="5.500" fill={GF} /><path d="M12 2h9c3 5 0 9-4 9l-5-2z" fill={GF} /><path d="M8 10l7 9M17 10l-7 9" strokeWidth="1.500" /><ellipse cx="8.500" cy="20.500" rx="1.800" ry="2.800" transform="rotate(25 8.500 20.500)" /><ellipse cx="16" cy="20.500" rx="1.800" ry="2.800" transform="rotate(-25 16 20.500)" /></g>,
  mergeBlob: <g stroke={G} strokeWidth="1.200"><ellipse cx="6" cy="7" rx="5" ry="5.500" fill={GF} /><ellipse cx="17" cy="7" rx="5.500" ry="5" fill={GF} /><path d="M8 5h8M8 8h8M6 12c2 4 6 6 8 11" /></g>,
  mergeAttr: <g stroke={G} strokeWidth="1.200"><path d="M2 3h20M2 8h7M15 8h7M2 13h20M2 18h7M15 18h7M2 23h20M8 5l4-2 4 2M8 10l4-2 4 2M8 15l4-2 4 2M8 20l4-2 4 2" /></g>,
  rotSym: <g stroke={G} strokeWidth="1.200"><path d="M12 1l10 6-8 6z" fill={GF} /><path d="M9 3C0 8 1 17 6 22M6 4h4v4" /><path d="M12 14l5 9H7z" stroke="#dcdcdc" /></g>,
  magnet: <g transform="rotate(45 12 12)"><path d="M4 3h5v9a3 3 0 0 0 6 0V3h5v9a8 8 0 0 1-16 0z" fill="#c80b10" stroke="#8e0508" /><path d="M4.500 3h4v4h-4zM15.500 3h4v4h-4z" fill="#f7e9e2" stroke="#b33" strokeWidth=".8" /></g>,
  snapV: <g stroke="#c6c6c0" strokeWidth="1.300"><path d="M3 2l6 16M9 14l7-11M6 9l10 2M16 3h5M8 18l8-5" /><rect x="1" y="0" width="3" height="3" /><rect x="14" y="2" width="3" height="3" /><rect x="19" y="2" width="3" height="3" /><rect x="14" y="9" width="3" height="3" /><path d="M13 16h11l-5.500 6z" fill="#999" stroke="none" /></g>,
  snapP: <g stroke="#c6c6c0" strokeWidth="1.200"><rect x="1" y="4" width="3" height="3" /><rect x="13" y="5" width="3" height="3" /><rect x="8" y="17" width="3" height="3" /><path d="M13 16h11l-5.500 6z" fill="#999" stroke="none" /></g>,
  topo: <g><path d="M3 1l5 10v12M8 11l13-5" stroke="#6fac78" strokeWidth="2" /><rect x="6" y="9" width="4" height="4" fill="#ccc" stroke="#666" /></g>,
  cross: <g stroke="#cdcdca" strokeWidth="1.500"><path d="M1 1l22 22M23 1L1 23" /><rect x="10" y="10" width="4" height="4" /></g>,
  trace: <g><path d="M23 1L1 23M3 2l6 11M16 8l2 11" stroke="#cdcdca" strokeWidth="1.500" /><path d="M5 5l6 6 7-7-1 14-5-4-7 4z" fill="#d5d2c2" /></g>,
  brush: <g><path d="M1 15l8-4 6 6-4 6c-4-1-8-4-10-8z" fill="#efb743" /><path d="M3 12l6-3 4 5z" fill="#d65a49" /><path d="M9 10l4-1 4 5-3 3z" fill="#8e8475" /><path d="M14 12l9-8" stroke="#b8793f" strokeWidth="2.500" /></g>,
  addGroup: <g stroke="#7d7d7d" strokeWidth="1.500"><path d="M2 9v14h12M6 5v14h12V5z" /><path d="M10 14V2h10v12" /><path d="M15 16h8v8h-8z" fill="#e8f2e8" stroke="#63a36a" /><path d="M19 17v6M16 20h6" stroke="#63a36a" /></g>,
  eye: <g><path d="M1 13C6 4 17 4 23 12c-6 7-16 8-22 1z" fill="#e3e7ea" stroke="#555" strokeWidth="1.600" /><circle cx="12" cy="11" r="5" fill="#42627e" /><path d="M2 8c6-6 14-6 20-1" stroke="#777" strokeWidth="1.300" /><path d="M12 14h13l-6 7z" fill="#4c4c4c" /></g>,
  filter: <g><path d="M1 3h22l-8 10v9l-6 2V13z" fill="#5b8cc0" stroke="#456" /><path d="M1 1h22v4H1z" fill="#f2df4a" stroke="#b9a52b" /></g>,
  eps: <g><path d="M12 2C7-2 2 1 5 5c-6 1-4 8 1 7 3 0 5-1 6-3M5 5h4" stroke="#6f3f7d" strokeWidth="2" /><path d="M12 13h13l-4 5v6h-4v-6z" fill="#ccc" stroke="#777" /></g>,
  expand: <g><path d="M3 2v18M3 4h6M3 12h6M3 20h6" stroke="#999" /><g fill="#fff" stroke="#dd944b" strokeWidth="1.600"><rect x="7" y="9" width="5" height="5" /><rect x="7" y="17" width="5" height="5" /></g><path d="M3 1h12" stroke="#999" strokeWidth="2" /><path d="M14 1h6v11h4l-7 9-7-9h4z" fill="#5386bd" stroke="#2d5076" /></g>,
  collapse: <g><path d="M3 2v18M3 4h6M3 12h6M3 20h6" stroke="#999" /><g fill="#fff" stroke="#dd944b" strokeWidth="1.600"><rect x="7" y="9" width="5" height="5" /><rect x="7" y="17" width="5" height="5" /></g><path d="M3 1h12" stroke="#999" strokeWidth="2" /><path d="M14 22h6V10h4l-7-9-7 9h4z" fill="#5386bd" stroke="#2d5076" /></g>,
  remove: <g><rect x="2" y="2" width="18" height="18" fill="#f3f3f3" stroke="#777" strokeWidth="1.500" /><rect x="14" y="14" width="10" height="9" rx="2" fill="#e2565a" /><path d="M16 18.500h6" stroke="#fff" strokeWidth="2" /></g>,
};

/* Places items in a row from the horizontal centre that each one has. */
function IconRow({ items, size, className }) {
  let end = 0;
  return (
    <div className={"flex items-center " + className}>
      {items.map(([cx, name, own]) => {
        const w = typeof own === "number" ? own : size;
        const margin = cx - w / 2 - end;
        end = cx + w / 2;
        return (
          <div key={cx} className="shrink-0" style={{ marginLeft: margin, width: w }}>
            {typeof name === "string" ? (
              <svg viewBox="0 0 24 24" fill="none" className="block w-full overflow-visible">{ICONS[name]}</svg>
            ) : name}
          </div>
        );
      })}
    </div>
  );
}

const TOP_TOOLS = [
  [11, "handle"],
  [35, <div className="flex h-[31px] w-8 items-center justify-center rounded-[2px] border border-[#b5b5b5] bg-[#dcdcdc] pl-px"><Svg className="h-[23px] w-[23px]">{ICONS.hand}</Svg></div>, 32],
  [68, "pan", 22], [101.5, "zoomIn", 22], [134, "zoomOut", 22], [168.5, "zoomFull", 22], [200.5, "zoomSel", 22], [233.5, "zoomLayer", 22], [266, "zoomOne", 22], [300, "zoomLast", 23], [333, "zoomNext", 23],
  [366, "mapNew", 22], [400, "markNew", 22], [431, "marks", 22], [464, "refresh", 22], [496, "handle", 24], [521, "info"], [554, "gearRun"], [579, "triGrey", 20], [605, "select"], [630, "tri", 20], [656, "form"], [681, "tri", 20], [708, "deselect"], [740, "table", 23], [773, "abacus"], [806, "gear", 23], [839, "sigma", 22], [872, "measure", 23], [897, "tri", 20], [923, "tip"], [956, "text", 23], [981, "tri", 20],
];
const Spin = ({ text, className, sep, grey }) => (
  <div className={"flex items-stretch rounded-[3px] border border-[#b0b0b0] " + className}>
    <div className="flex flex-1 items-center pl-1">{text}</div>
    <div className={"flex flex-col items-center justify-center gap-1 border-l border-[#b0b0b0] bg-[#f7f7f7] " + sep}>
      <svg viewBox="0 0 8 5" className="h-[5px] w-[9px]"><path d="M0 5h8L4 0z" fill={grey ? "#999" : "#555"} /></svg>
      <svg viewBox="0 0 8 5" className="h-[5px] w-[9px]"><path d="M0 0h8L4 5z" fill={grey ? "#999" : "#555"} /></svg>
    </div>
  </div>
);
const EDIT_TOOLS = [
  [11, "handle"], [37, "pencils", 23], [68, "pencil", 23], [101, "save", 22], [135, "blobNew", 23], [168, "vertex", 21], [192, "triGrey", 20], [218, "tableEdit", 22], [250, "trash", 20], [284, "cut", 22], [316, "copy", 21], [350, "paste", 21], [383, "undo", 21], [415, "redo", 21], [448, "handle", 22], [473, "handle", 22],
  [498, "square"], [532, "move", 23], [556, "triGrey", 20], [583, "rotate", 22], [616, "simplify", 23], [649, "ring", 23], [682, "part", 23], [715, "fill", 23], [748, "delRing", 23], [781, "delPart", 23], [813, "reshape", 21], [846, "offset", 22], [880, "splitVertex", 22], [912, "merge", 22], [945, "scissorBlob", 22], [978, "scissorBlob", 22], [1011, "mergeBlob", 22], [1044, "mergeAttr", 20], [1077, "rotSym", 20], [1102, "triGrey", 20], [1127, "handle", 22], [1152, "magnet", 22], [1187, "snapV", 22], [1221, "snapP", 22],
  [1276, <Spin grey text="12" sep="w-5" className="h-[22px] w-[82px] bg-[#efefef] text-[11.500px] text-[#777]" />, 82],
  [1380.5, <div className="flex h-[27px] w-[123px] items-center justify-between rounded-[3px] border border-[#c4c4c4] bg-gradient-to-b from-white to-[#f2f2f2] pl-[3px] pr-1.5 text-[11px] text-[#777]">px<Svg className="h-5 w-5">{ICONS.triGrey}</Svg></div>, 123],
  [1461, "topo", 21], [1493, "cross", 21], [1526, "trace", 21], [1551, "triGrey", 20],
];
const PANEL_TOOLS = [[18, "brush", 14], [43, "addGroup", 15], [69, "eye", 16], [93, "filter", 14], [118, "eps", 15], [139, "tri", 20], [161, "expand", 15], [186, "collapse", 15], [210.5, "remove", 15]];

/* label, underlined letter index, slot width */
const MENU = [
  ["Projecte", -1, "w-[60px]"], ["Edita", 0, "w-[43px]"], ["Visualitza", 0, "w-[66px]"], ["Capa", 0, "w-[44px]"], ["Preferències", 11, "w-[81px]"], ["Complements", 0, "w-[92px]"], ["Vectorial", 4, "w-[62px]"], ["Ràster", 0, "w-[49px]"], ["Base de dades", 8, "w-[91px]"], ["Lloc web", 5, "w-[64px]"], ["Mesh", 0, "w-[46px]"], ["MMQGIS", -1, "w-[65px]"], ["Procés", 3, "w-[55px]"], ["Ajuda", 0, "w-[40px]"],
];

const Check = () => (
  <div className="flex h-5 w-5 shrink-0 items-center justify-center border border-[#b8b8b8] bg-white">
    <svg viewBox="0 0 16 16" className="h-4 w-4" fill="none"><path d="M2 8l4.500 6L13.500 1.500" stroke="#000" strokeWidth="2.600" /></svg>
  </div>
);

export default function App() {
  return (
    <div className="flex h-[1039px] w-[1920px] flex-col overflow-hidden bg-[#efefef] font-['Open_Sans','Noto_Sans',sans-serif] text-black">
      <header className="flex h-[23px] shrink-0 items-center bg-white">
        <svg viewBox="0 0 16 16" className="ml-[2px] h-4 w-4" fill="none">
          <circle cx="7.500" cy="7.500" r="5.700" stroke="#589632" strokeWidth="3.200" />
          <path d="M8.500 8.500l6.500 7" stroke="#589632" strokeWidth="3.600" /><path d="M7 7l4 4" stroke="#ee7913" strokeWidth="3" /><path d="M7 7l2 1.500" stroke="#f0e64a" strokeWidth="2" />
        </svg>
        <span className="ml-[5px] text-[11.500px] tracking-[-0.140px] text-[#7d7d7d]">*Projecte sense títol - QGIS</span>
        <div className="ml-auto mr-[20px] flex items-center gap-[36px] text-[#777]">
          <svg viewBox="0 0 10 10" className="h-2.5 w-2.5" stroke="currentColor" fill="none"><path d="M0 4.500h10" /></svg>
          <svg viewBox="0 0 10 10" className="mb-[3px] h-[9px] w-[9px] overflow-visible" stroke="currentColor" fill="none"><path d="M.5 2.500h7v7h-7zM2.500 2.500v-2h7v7h-2" /></svg>
          <svg viewBox="0 0 10 10" className="mb-[3px] h-2.5 w-2.5 overflow-visible" stroke="currentColor" fill="none"><path d="M0 0l10 10M10 0L0 10" /></svg>
        </div>
      </header>

      <nav className="flex h-5 shrink-0 items-center border-b border-[#cfcfcf] pl-[13.500px] text-[11.500px] tracking-[-0.220px] text-[#9b9b9b]">
        {MENU.map(([label, u, w]) => (
          <span key={label} className={"shrink-0 whitespace-nowrap " + w}>
            {u < 0 ? label : <>{label.slice(0, u)}<u className="underline-offset-2">{label[u]}</u>{label.slice(u + 1)}</>}
          </span>
        ))}
      </nav>

      <IconRow items={TOP_TOOLS} size={24} className="h-[43px] shrink-0 border-b border-[#bdbdbd] bg-gradient-to-b from-[#fafafa] to-[#efefef]" />
      <IconRow items={EDIT_TOOLS} size={24} className="h-[44px] shrink-0 border-b-2 border-[#b9b9b9] bg-gradient-to-b from-[#fafafa] to-[#efefef]" />

      <main className="flex h-[874px] shrink-0">
        <aside className="flex w-[256px] flex-col">
          <div className="flex h-[19px] items-center pl-1 text-[11.500px] tracking-[-0.100px]">
            Capes
            <div className="ml-auto mr-[2px] flex gap-1 text-[#666]">
              <svg viewBox="0 0 11 11" className="h-[11px] w-[11px]" fill="none" stroke="currentColor"><rect x=".5" y=".5" width="10" height="10" rx="2" /><path d="M2.500 5h3.500v3.500H2.500zM4.500 5V2.500H8.500V6.500H6" /></svg>
              <svg viewBox="0 0 11 11" className="h-[11px] w-[11px]" fill="none" stroke="currentColor"><rect x=".5" y=".5" width="10" height="10" rx="2" /><path d="M3 3l5 5M8 3L3 8" strokeWidth="2" /></svg>
            </div>
          </div>
          <IconRow items={PANEL_TOOLS} size={15} className="h-[36px]" />
          <div className="flex-1 border border-[#b8b8b8] bg-white text-[11.500px] font-bold tracking-[-0.380px]">
            <div className="flex h-[24px] items-center pl-[33px] pt-px">
              <Check />
              <div className="ml-[7px] h-[4px] w-[22px] bg-[#4779b5]" />
              <span className="ml-[6px]">Line</span>
              <div className="ml-auto mr-[2px] h-5 w-[5px] bg-[#e2e2e2]" />
            </div>
            <div className="flex h-[23px] items-center bg-[#efefef] pl-[33px]">
              <Check />
              <div className="ml-[7px] h-[22px] w-[22px] border border-[#35607e] bg-[#72b2df]" />
              <span className="ml-[6px] underline underline-offset-2">Barcelona</span>
              <div className="ml-auto mr-[3px] flex h-[19px] w-[19px] items-center justify-center rounded-[2px] border border-[#dfe5ea] bg-[#f3f4f5]">
                <svg viewBox="0 0 14 14" className="h-3.5 w-3.5" fill="none" stroke="#6d8192" strokeWidth="1.100"><path d="M.5 1h13v2L9 7.500V12l-3.500 1.500v-6L.5 3z" fill="#dbe5ee" /><path d="M.5 3.200h13" /></svg>
              </div>
              <div className="mr-[2px] h-5 w-[5px] bg-[#dcdcdc]" />
            </div>
          </div>
        </aside>
        <div className="flex w-[9px] flex-col items-center justify-center gap-[2px]">
          {[0, 1, 2, 3, 4].map((i) => <i key={i} className="h-px w-[3px] bg-[#bbb]" />)}
        </div>
        <section className="w-[1655px] overflow-hidden border border-t-0 border-[#b8b8b8] bg-white">
          <MapCanvas />
        </section>
      </main>

      <footer className="flex min-h-0 flex-1 items-center pt-px text-[11.500px] tracking-[-0.450px]">
        <div className="ml-[4px] flex h-[22px] w-[360px] items-center rounded-[3px] border border-[#acacac] bg-white pl-[8px] text-[#7d7d7d]">
          <svg viewBox="0 0 13 13" className="h-[13px] w-[13px]" fill="none" stroke="#8a8a8a" strokeWidth="1.200"><circle cx="5" cy="5" r="4" /><path d="M8 8l4.500 4.500" /></svg>
          <span className="ml-[6px] tracking-[-0.450px]">Escriu per localitzar (Ctrl+K)</span>
        </div>
        <span className="ml-[7px] w-[633px] tracking-[-0.600px]">Commuta l'edició de la capa activa</span>
        <span className="w-[63px] whitespace-nowrap tracking-[-0.500px]">Coordenada</span>
        <div className="flex h-[22px] w-[98px] items-center rounded-[3px] border border-[#acacac] bg-white pl-[6px] tracking-[-0.420px]">508211,4618637</div>
        <svg viewBox="0 0 24 24" className="ml-[3px] h-6 w-6" fill="none" stroke="#111" strokeWidth="1.700"><rect x="3" y="0" width="7" height="14" rx="3.500" transform="rotate(-18 6 7)" fill="#fff" /><path d="M7 1l4 12M3 8l8-3M2 12l5 3 4-4" /><rect x="10" y="2" width="5" height="11" rx="2.500" transform="rotate(18 12 7)" fill="#fff" /><rect x="9" y="12" width="12" height="9" rx="4.500" transform="rotate(-28 15 16)" fill="#fff" /><circle cx="16" cy="17" r="1.500" /><path d="M10 13l5 8" /><path d="M17 4l5-3" strokeDasharray="1.500 1.500" /></svg>
        <span className="ml-[12px] w-[34px]">Escala</span>
        <div className="flex h-[27px] w-[114px] items-center justify-between rounded-[3px] border border-[#b5b5b5] bg-gradient-to-r from-white from-[72%] to-[#f3f3f3] to-[73%] pl-1 pr-[6px] tracking-[-0.380px]">1:917920<Svg className="h-5 w-5">{ICONS.tri}</Svg></div>
        <svg viewBox="0 0 18 23" className="ml-[13px] h-[23px] w-[18px]" fill="none"><path d="M4 11V6a5 5 0 0 1 10 0v5" stroke="#777" strokeWidth="2.200" /><rect x=".5" y="10" width="17" height="12.500" rx="1.500" fill="#666" /></svg>
        <span className="ml-[9px] w-[27px]">Lupa</span>
        <Spin text="100%" sep="w-[21px]" className="h-[28px] w-[105px] bg-white" />
        <span className="ml-[8px] w-[46px]">Rotació</span>
        <Spin text={"0,0 °"} sep="w-[21px]" className="h-[28px] w-[101px] bg-white tracking-normal" />
        <div className="ml-[7px]"><Check /></div>
        <span className="ml-[7px] w-[70px]">Renderitza</span>
        <svg viewBox="0 0 24 24" className="h-[23px] w-[23px]" fill="none" stroke="#666" strokeWidth="1.200"><ellipse cx="12" cy="10" rx="11" ry="9" fill="#ddd" /><path d="M1 10h22M4 5h16M4 15h16M12 1v21M12 1c-7 5-7 13 0 18M12 1c7 5 7 13 0 18M6 22h12" /></svg>
        <span className="ml-[4px] w-[78px] tracking-[-0.400px]">EPSG:25831</span>
        <svg viewBox="0 0 24 24" className="h-6 w-6" fill="none"><path d="M12 2c14 0 14 17 6 17l2 4-6-4C-3 21-3 2 12 2z" fill="#666" /><g fill="#fff"><circle cx="7.500" cy="10.500" r="1.500" /><circle cx="12" cy="10.500" r="1.500" /><circle cx="16.500" cy="10.500" r="1.500" /></g></svg>
      </footer>
    </div>
  );
}
